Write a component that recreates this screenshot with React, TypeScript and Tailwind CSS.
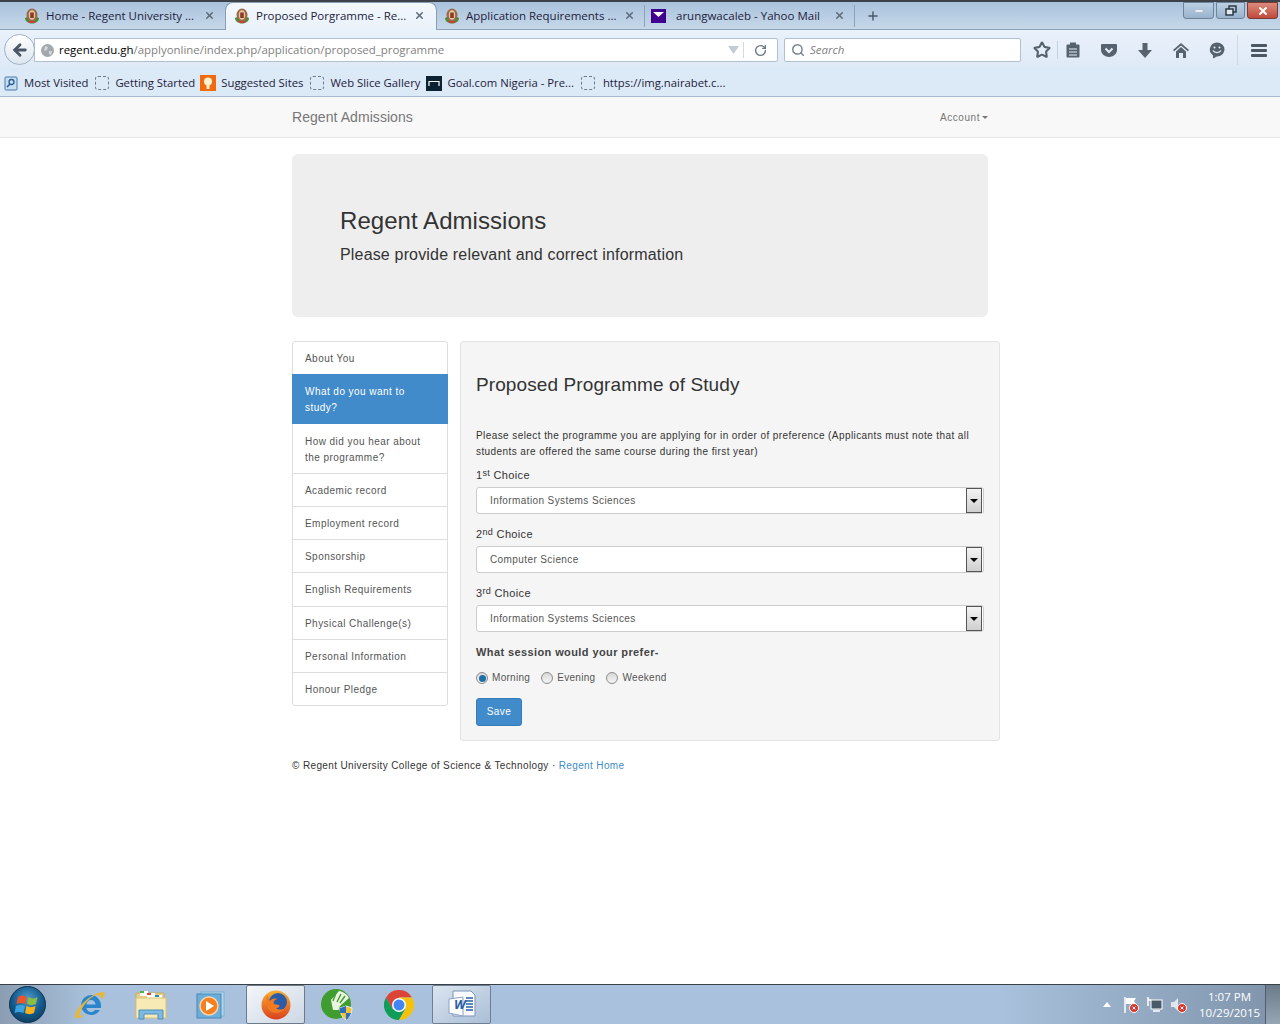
import { ArrowLeft, RotateCw, Search, Star, Plus, X, Minus } from 'lucide-react';

const uiFont = { fontFamily: '"Open Sans", "Noto Sans", sans-serif' };

function Crest() {
  return (
    <svg width="16" height="16" viewBox="0 0 16 16" className="shrink-0">
      <path d="M1 10c0 3 3 5.500 7 5.500s7-2.500 7-5.500l-2-1H3z" fill="#4f8a3a" />
      <ellipse cx="8" cy="7" rx="5.500" ry="6.500" fill="#9a6a48" />
      <ellipse cx="8" cy="7" rx="3.200" ry="4.800" fill="#e6c8a0" />
      <rect x="6.200" y="4.500" width="3.600" height="5.500" fill="#8a3b2a" />
      <path d="M4 13h8l-1.500 2h-5z" fill="#c9423a" />
    </svg>
  );
}

function DashedIcon() {
  return <span className="w-[14px] h-[14px] shrink-0 rounded-[3px] border border-dashed border-[#6b7a8c]" />;
}

function Tab({ label, active, icon, width, left, right, gap }: { label: string; active?: boolean; icon: React.ReactNode; width: string; left: string; right: string; gap: string }) {
  return (
    <div className={`flex items-center self-stretch ${left} ${right} ${gap} text-[11.5px] text-[#231c3c] ${width} ${active ? '-mb-px pb-[2px] bg-gradient-to-b from-[#f3f8fd] to-[#e9f1fa] rounded-t-[8px] border border-b-0 border-[#8a9db3]' : ''}`}>
      {icon}
      <span className="flex-1 whitespace-nowrap">{label}</span>
      <X className="w-[11px] h-[11px] text-[#5f6d7c] shrink-0" strokeWidth={3.5} />
    </div>
  );
}

function Bookmark({ icon, label, offset, gap = 'gap-[6px]' }: { icon: React.ReactNode; label: string; offset: string; gap?: string }) {
  return (
    <div className={`flex items-center ${gap} ${offset} whitespace-nowrap`}>
      {icon}
      <span>{label}</span>
    </div>
  );
}

function BrowserChrome() {
  return (
    <div style={uiFont} className="h-[97px] shrink-0 flex flex-col border-b border-[#a9bccf] bg-[#dce9f7]">
      <div className="h-[30px] shrink-0 flex items-end pl-[15px] pr-[2px] border-t-2 border-t-[#3c4248] border-b border-b-[#8da2b8] bg-gradient-to-b from-[#a9c2dc] to-[#c6d8ea]">
        <Tab label="Home - Regent University ..." width="w-[210px]" left="pl-[9px]" right="pr-[10px]" gap="gap-[6px]" icon={<Crest />} />
        <Tab label="Proposed Porgramme - Re..." active width="w-[212px]" left="pl-[8px]" right="pr-[11px]" gap="gap-[6px]" icon={<Crest />} />
        <Tab label="Application Requirements ..." width="w-[207px]" left="pl-[7px]" right="pr-[9px]" gap="gap-[6px]" icon={<Crest />} />
        <div className="w-px h-[22px] bg-[#8da2b8] self-center" />
        <Tab
          label="arungwacaleb - Yahoo Mail"
          width="w-[209px]"
          left="pl-[6px]"
          right="pr-[9px]"
          gap="gap-[10px]"
          icon={
            <svg width="15" height="14" viewBox="0 0 15 14" className="shrink-0">
              <rect width="15" height="14" fill="#400090" />
              <path d="M2 3h11L7.500 8z" fill="#fff" />
            </svg>
          }
        />
        <div className="w-px h-[22px] bg-[#8da2b8] self-center" />
        <Plus className="w-[14px] h-[14px] text-[#4a5a6a] ml-[11px] self-center" strokeWidth={2.5} />
        <div className="flex-1" />
        <div className="flex self-start gap-[2px]">
          <div className="w-[31px] h-[17px] rounded-b-[3px] border border-[#6f8399] bg-gradient-to-b from-[#bcd0e4] to-[#9ab3cd] flex items-center justify-center">
            <Minus className="w-[10px] h-[10px] text-white" strokeWidth={4} />
          </div>
          <div className="w-[29px] h-[17px] rounded-b-[3px] border border-[#6f8399] bg-gradient-to-b from-[#bcd0e4] to-[#9ab3cd] flex items-center justify-center">
            <svg width="12" height="11" viewBox="0 0 12 11" fill="none" stroke="#26313d" strokeWidth="1.400">
              <rect x="4" y="1" width="7" height="6" />
              <rect x="1" y="4" width="7" height="6" fill="#dfe8f1" />
            </svg>
          </div>
          <div className="w-[31px] h-[17px] rounded-b-[3px] border border-[#7c3b34] bg-gradient-to-b from-[#dc8b7c] to-[#c0493a] flex items-center justify-center">
            <X className="w-[12px] h-[12px] text-white" strokeWidth={4} />
          </div>
        </div>
      </div>
      <div className="h-[37px] shrink-0 flex items-center relative pt-[3px] pl-[34px] pr-[8px] bg-gradient-to-b from-[#e9f1fa] to-[#dfeaf7]">
        <div className="absolute left-[4px] top-[4px] w-[31px] h-[31px] rounded-full border border-[#9fb2c6] bg-gradient-to-b from-white to-[#dde6ef] flex items-center justify-center z-10">
          <ArrowLeft className="w-[18px] h-[18px] text-[#4a5766]" strokeWidth={3.8} />
        </div>
        <div className="w-[744px] h-[24px] flex items-center bg-white border border-[#b0c0d0] rounded-r-[2px] pl-[6px] text-[11.45px] text-[#7f7f7f]">
          <svg width="13" height="13" viewBox="0 0 13 13" className="shrink-0">
            <circle cx="6.500" cy="6.500" r="6.500" fill="#a3a8ad" />
            <path d="M4 2l3 1-1 3-3 1zM8 7l3 0-1 4-2-1z" fill="#d5d8db" />
          </svg>
          <span className="ml-[5px] flex-1 whitespace-nowrap">
            <span className="text-black">regent.edu.gh</span>/applyonline/index.php/application/proposed_programme
          </span>
          <svg width="11" height="8" viewBox="0 0 11 8" className="mr-[4px]">
            <path d="M0 0h11L5.500 8z" fill="#c3ccd5" />
          </svg>
          <div className="w-px h-[16px] bg-[#d3dae1]" />
          <RotateCw className="w-[13px] h-[13px] mx-[10px] text-[#6c7884]" strokeWidth={2.5} />
        </div>
        <div className="ml-[6px] w-[237px] h-[24px] flex items-center bg-white border border-[#b0c0d0] rounded-[2px] pl-[6px] text-[11.5px] italic text-[#7f7f7f]">
          <Search className="w-[14px] h-[14px] text-[#77828e] mr-[5px]" strokeWidth={2.5} />
          Search
        </div>
        <div className="flex items-center ml-[12px]">
          <Star className="w-[18px] h-[18px] text-[#56636f]" strokeWidth={2.8} />
          <div className="w-px h-[18px] bg-[#c5d2df] ml-[6px]" />
          <svg width="14" height="16" viewBox="0 0 14 16" className="ml-[8px]">
            <rect x="0.500" y="2.500" width="13" height="13" rx="1" fill="#56636f" />
            <rect x="4" y="0.500" width="6" height="3" fill="#56636f" />
            <path d="M3 7h8M3 10h8M3 13h8" stroke="#e3edf8" strokeWidth="1.200" />
          </svg>
          <svg width="16" height="15" viewBox="0 0 16 15" className="ml-[21px]">
            <path d="M1 1h14a1 1 0 011 1v5c0 4-4 7-8 7s-8-3-8-7V2a1 1 0 011-1z" fill="#56636f" />
            <path d="M4.500 5.500L8 9l3.500-3.500" fill="none" stroke="#e3edf8" strokeWidth="2" />
          </svg>
          <svg width="18" height="17" viewBox="0 0 18 17" className="ml-[19px]">
            <path d="M6.500 1h5v7H16l-7 8-7-8h4.500z" fill="#56636f" />
          </svg>
          <svg width="18" height="17" viewBox="0 0 18 17" className="ml-[18px]">
            <path d="M9 1l8 7-1.200 1.200L9 3.500 2.200 9.200 1 8z" fill="#56636f" />
            <path d="M9 5l5 4.500V16h-3v-5H7v5H4V9.500z" fill="#56636f" />
          </svg>
          <svg width="16" height="17" viewBox="0 0 16 17" className="ml-[19px]">
            <path d="M8 0.500a7.500 7 0 110 14l-4 2 0-3.300A7.500 7 0 018 0.500z" fill="#56636f" />
            <circle cx="5.500" cy="5.500" r="1" fill="#e3edf8" />
            <circle cx="10.500" cy="5.500" r="1" fill="#e3edf8" />
            <path d="M4 8.500c1.500 2.800 6.500 2.800 8 0" fill="none" stroke="#e3edf8" strokeWidth="1.400" />
          </svg>
          <div className="w-px h-[30px] bg-[#cbd8e5] ml-[12px]" />
          <div className="flex flex-col gap-[2px] ml-[13px]">
            <span className="w-[16px] h-[3px] bg-[#4b5763] rounded-[1px]" />
            <span className="w-[16px] h-[3px] bg-[#4b5763] rounded-[1px]" />
            <span className="w-[16px] h-[3px] bg-[#4b5763] rounded-[1px]" />
          </div>
        </div>
      </div>
      <div className="flex-1 flex items-center pt-[3px] pl-[4px] text-[11.3px] text-[#231c3c]">
        <Bookmark
          label="Most Visited"
          offset="ml-0"
          icon={
            <svg width="14" height="15" viewBox="0 0 14 15">
              <rect x="1" y="1" width="12" height="13" rx="1" fill="#c6dcf0" stroke="#4d7ba8" />
              <circle cx="7.500" cy="6" r="2.500" fill="none" stroke="#2a5f95" strokeWidth="1.300" />
              <path d="M6 8l-3 3" stroke="#2a5f95" strokeWidth="1.600" />
            </svg>
          }
        />
        <Bookmark label="Getting Started" offset="ml-[7px]" icon={<DashedIcon />} />
        <Bookmark
          label="Suggested Sites"
          offset="ml-[5px]"
          gap="gap-[5px]"
          icon={
            <svg width="16" height="16" viewBox="0 0 16 16">
              <rect width="16" height="16" fill="#f26a0f" />
              <circle cx="8" cy="6.500" r="4" fill="#fff3d0" />
              <rect x="6.500" y="10" width="3" height="4" fill="#fff3d0" />
            </svg>
          }
        />
        <Bookmark label="Web Slice Gallery" offset="ml-[7px]" icon={<DashedIcon />} />
        <Bookmark
          label="Goal.com Nigeria - Pre..."
          offset="ml-[6px]"
          gap="gap-[5px]"
          icon={
            <svg width="16" height="15" viewBox="0 0 16 15">
              <rect width="16" height="15" fill="#0c2233" />
              <path d="M3 10V5.500h10V10" fill="none" stroke="#fff" strokeWidth="1.200" />
            </svg>
          }
        />
        <Bookmark label="https://img.nairabet.c..." offset="ml-[7px]" gap="gap-[8px]" icon={<DashedIcon />} />
      </div>
    </div>
  );
}

const sideItems = [
  { label: 'Academic record', height: 'h-[33px]' },
  { label: 'Employment record', height: 'h-[33px]' },
  { label: 'Sponsorship', height: 'h-[33px]' },
  { label: 'English Requirements', height: 'h-[34px]' },
  { label: 'Physical Challenge(s)', height: 'h-[33px]' },
  { label: 'Personal Information', height: 'h-[33px]' },
];

function Sidebar() {
  return (
    <div className="w-[156px] shrink-0 self-start bg-white border border-[#ddd] rounded-[3px] text-[10px] leading-[16px] tracking-[0.45px] text-[#555]">
      <div className="h-[32px] px-[12px] pt-[2px] flex items-center">About You</div>
      <div className="-mx-px px-[13px] pt-[10px] h-[50px] bg-[#428bca] text-white">What do you want to study?</div>
      <div className="px-[12px] pt-[10px] h-[50px] border-b border-[#ddd]">How did you hear about the programme?</div>
      {sideItems.map((item) => (
        <div key={item.label} className={`${item.height} px-[12px] pt-px flex items-center border-b border-[#ddd]`}>
          {item.label}
        </div>
      ))}
      <div className="h-[32px] px-[12px] pt-[2px] flex items-center">Honour Pledge</div>
    </div>
  );
}

function ChoiceSelect({ value }: { value: string }) {
  return (
    <div className="h-[27px] flex items-center bg-white border border-[#ccc] rounded-[3px] pl-[13px] pr-px text-[10px] tracking-[0.4px] text-[#555]">
      <span className="flex-1">{value}</span>
      <div className="w-[16px] h-[25px] border border-[#555] bg-gradient-to-b from-[#f4f4f4] to-[#cfcfcf] flex items-center justify-center">
        <span className="w-0 h-0 border-x-[4px] border-x-transparent border-t-[4px] border-t-black" />
      </div>
    </div>
  );
}

function Choice({ num, suffix, value }: { num: string; suffix: string; value: string }) {
  return (
    <div>
      <div className="h-[19px] text-[11px] leading-[19px] tracking-[0.35px] text-[#333] mb-[2px]">
        {num}
        <sup className="text-[9px] -top-[3px]">{suffix}</sup> Choice
      </div>
      <ChoiceSelect value={value} />
    </div>
  );
}

function Radio({ label, checked }: { label: string; checked?: boolean }) {
  return (
    <div className="flex items-center gap-[4px] mr-[11px] text-[10px] tracking-[0.3px] text-[#555]">
      <span className="w-[12px] h-[12px] mt-[2px] rounded-full border border-[#8c8c8c] bg-gradient-to-b from-[#d8d8d8] to-[#f5f5f5] flex items-center justify-center">
        {checked && <span className="w-[7px] h-[7px] rounded-full bg-[#1c6fa8]" />}
      </span>
      {label}
    </div>
  );
}

export default function App() {
  return (
    <div className="h-[1024px] flex flex-col overflow-hidden bg-white" style={{ fontFamily: '"Liberation Sans", Arial, sans-serif' }}>
      <BrowserChrome />

      <div className="flex-1 min-h-0">
        {/* Navbar */}
        <div className="h-[41px] bg-[#f8f8f8] border-b border-[#e7e7e7]">
          <div className="w-[696px] ml-[292px] h-full flex items-center justify-between">
            <span className="text-[14px] tracking-[0.06px] text-[#777]">Regent Admissions</span>
            <span className="flex items-center gap-[2px] text-[10px] tracking-[0.55px] text-[#777]">
              Account
              <span className="w-0 h-0 mt-[1px] border-x-[3px] border-x-transparent border-t-[3px] border-t-[#777]" />
            </span>
          </div>
        </div>

        <div className="w-[708px] ml-[292px]">
          {/* Jumbotron */}
          <div className="w-[696px] h-[163px] mt-[16px] bg-[#eee] rounded-[6px] pl-[48px] pt-[50px]">
            <div className="text-[24px] leading-[34px] tracking-[0.05px] text-[#333]">Regent Admissions</div>
            <div className="text-[16px] leading-[22px] tracking-[0.17px] mt-[6px] text-[#333]">Please provide relevant and correct information</div>
          </div>

          <div className="flex gap-[12px] mt-[24px]">
            <Sidebar />
            <div className="flex-1 h-[400px] bg-[#f5f5f5] border border-[#e3e3e3] rounded-[3px] pl-[15px] pr-[15px]">
              <div className="text-[19px] leading-[24px] tracking-[0.1px] mt-[31px] text-[#333]">Proposed Programme of Study</div>
              <p className="text-[10px] leading-[16px] tracking-[0.42px] mt-[31px] text-[#333]">
                Please select the programme you are applying for in order of preference (Applicants must note that all students are offered the same course during the first year)
              </p>
              <div className="flex flex-col gap-[11px] mt-[6px]">
                <Choice num="1" suffix="st" value="Information Systems Sciences" />
                <Choice num="2" suffix="nd" value="Computer Science" />
                <Choice num="3" suffix="rd" value="Information Systems Sciences" />
              </div>
              <div className="text-[11px] font-bold tracking-[0.4px] mt-[12px] text-[#444]">What session would your prefer-</div>
              <div className="flex mt-[9px]">
                <Radio label="Morning" checked />
                <Radio label="Evening" />
                <Radio label="Weekend" />
              </div>
              <div className="w-[46px] h-[28px] mt-[13px] bg-[#428bca] border border-[#357ebd] rounded-[3px] flex items-center justify-center text-[10px] tracking-[0.4px] text-white">
                Save
              </div>
            </div>
          </div>

          <div className="mt-[17px] text-[10px] tracking-[0.37px] text-[#333]">
            © Regent University College of Science &amp; Technology · <span className="text-[#428bca]">Regent Home</span>
          </div>
        </div>
      </div>

      {/* Taskbar */}
      <div className="h-[40px] shrink-0 flex items-center border-t border-t-[#3a4048] bg-[linear-gradient(90deg,#8b9db2_0px,#a9c1dc_90px,#a9c1dc_1000px,#7f94ab_1280px)]" style={uiFont}>
        <div className="w-[54px] flex justify-center">
          <svg width="37" height="37" viewBox="0 0 37 37">
            <defs>
              <radialGradient id="orb" cx="50%" cy="35%" r="70%">
                <stop offset="0%" stopColor="#4f9fd0" />
                <stop offset="60%" stopColor="#15588a" />
                <stop offset="100%" stopColor="#0e3a5a" />
              </radialGradient>
            </defs>
            <circle cx="18.500" cy="18.500" r="18" fill="url(#orb)" stroke="#0f3350" />
            <path d="M9 11c3-2 6-2 9 0l-1.500 7c-3-1.500-6-1.500-9 0z" fill="#e9562c" />
            <path d="M19.500 11c3 2 6 2 9 0L27 18c-3 1.500-6 1.500-9 0z" fill="#8cbf3f" />
            <path d="M7 20c3-1.500 6-1.500 9 0l-1.500 7c-3-1.500-6-1.500-9 0z" fill="#3ba3e0" />
            <path d="M17.500 20c3 1.500 6 1.500 9 0L25 27c-3 1.500-6 1.500-9 0z" fill="#f7b21b" />
          </svg>
        </div>
        <div className="w-[72px] flex justify-center">
          <svg width="32" height="32" viewBox="0 0 32 32">
            <path d="M17 6a10 10 0 100 20c4 0 7-2 9-5h-5c-1 1.500-2.500 2-4 2-2.500 0-4.500-2-4.500-4H27c1-7-4-13-10-13zm-4.500 9.500c0-2.500 2-4.500 4.500-4.500s4.500 2 4.500 4.500z" fill="#2a86cc" />
            <path d="M1 28C0 21 17 3 30 3c2 2-1 6-3 8 .5-3-.5-5-4-5C16 7 7 18 5 27c3 0 6-1 8-3-4 4-10 7-12 4z" fill="#e8b73a" />
          </svg>
        </div>
        <div className="w-[50px] flex justify-center">
          <svg width="32" height="30" viewBox="0 0 32 30">
            <path d="M1 3h28v24H1z" fill="#e6cf86" stroke="#c4ac63" />
            <rect x="5" y="1" width="8" height="5" fill="#fff" />
            <rect x="5" y="1" width="4" height="2" fill="#4caf50" />
            <rect x="12" y="3" width="8" height="5" fill="#fff" />
            <rect x="12" y="3" width="4" height="2" fill="#d9453a" />
            <rect x="19" y="5" width="8" height="5" fill="#fff" />
            <rect x="20" y="5" width="4" height="2" fill="#2a86cc" />
            <rect x="1" y="8" width="30" height="20" fill="#f8eab4" stroke="#d9c37d" />
            <path d="M4 29v-9h24v9h-5v-5H9v5z" fill="#7db9e0" stroke="#4d8fbd" />
          </svg>
        </div>
        <div className="w-[70px] flex justify-center">
          <svg width="30" height="30" viewBox="0 0 30 30">
            <rect x="5" y="2" width="23" height="24" fill="#b5d6ec" stroke="#7db0d1" />
            <rect x="1" y="4" width="24" height="24" fill="#6aaedb" stroke="#4b87b4" />
            <circle cx="13" cy="16" r="9" fill="#f4811f" stroke="#fbd2a8" strokeWidth="1.500" />
            <path d="M10 11l8 5-8 5z" fill="#fff" />
          </svg>
        </div>
        <div className="w-[59px] h-[39px] flex items-center justify-center border border-[#6d7a8a] rounded-[2px] bg-gradient-to-br from-[#f3f6fa] to-[#cdd8e4]">
          <svg width="30" height="30" viewBox="0 0 30 30">
            <defs>
              <linearGradient id="fox" x1="0" y1="0" x2="0" y2="1">
                <stop offset="0%" stopColor="#f9b233" />
                <stop offset="100%" stopColor="#d9401f" />
              </linearGradient>
            </defs>
            <circle cx="15" cy="15" r="14.500" fill="url(#fox)" />
            <circle cx="17" cy="12" r="9" fill="#2a5ca8" />
            <path d="M6 5C4 11 5 19 11 22c5 2 11 0 13-4-3 2-7 2-9 0 3 0 4-2 3-3l-5-1c-1-3 1-4 3-5-3-1-6 0-7 2-1-2-2-4-3-6z" fill="#f47a20" />
          </svg>
        </div>
        <div className="w-[64px] flex justify-center">
          <svg width="32" height="32" viewBox="0 0 32 32">
            <circle cx="15" cy="15" r="15" fill="#3f9c2f" />
            <path d="M18 2c4 .5 8 3 10 7l-9 8-1.500 4H12l-2-10z" fill="#eaf4de" />
            <path d="M15 4l-3 8M20 5l-4 8M24 7l-5 7" stroke="#3f9c2f" strokeWidth="1.400" />
            <path d="M19 19l6-2 6 2c0 6-3 10-6 12-3-2-6-6-6-12z" fill="#f2c230" stroke="#e8eef5" />
            <path d="M25 17v7h-6c0-2 0-4 0-5zM25 24h5c-1 3-3 6-5 7z" fill="#2c6fc0" />
          </svg>
        </div>
        <div className="w-[60px] flex justify-center">
          <svg width="30" height="30" viewBox="0 0 30 30">
            <path d="M28 7.500H15L8.500 18.750 2 7.500A15 15 0 0128 7.500z" fill="#db4437" />
            <path d="M2 7.500l6.500 11.250h13L15 30A15 15 0 012 7.500z" fill="#0f9d58" />
            <path d="M28 7.500H15l6.500 11.250L15 30A15 15 0 0028 7.500z" fill="#f4c20d" />
            <circle cx="15" cy="15" r="7" fill="#fff" />
            <circle cx="15" cy="15" r="5.500" fill="#4285f4" />
          </svg>
        </div>
        <div className="w-[59px] h-[39px] ml-[3px] flex items-center justify-center border border-[#6f7f92] rounded-[2px] bg-gradient-to-br from-[#dbe5f0] to-[#a9bed6]">
          <svg width="32" height="30" viewBox="0 0 32 30">
            <path d="M7 1h18l4 4v21H7z" fill="#f7f9fc" stroke="#7d95b8" />
            <rect x="11" y="5" width="16" height="14" fill="#fff" />
            <path d="M3 9l14 -2v19L3 23z" fill="#fff" stroke="#8aa3c6" />
            <text x="8" y="19" fontSize="13" fontWeight="700" fontStyle="italic" fill="#2b5ea8">W</text>
            <path d="M20 8h7M20 11h7M20 14h7M20 17h7M20 20h7" stroke="#2b5ea8" strokeWidth="1.600" />
          </svg>
        </div>
        <div className="flex-1" />
        <svg width="8" height="5" viewBox="0 0 8 5" className="mr-[11px]">
          <path d="M4 0l4 5H0z" fill="#fff" />
        </svg>
        <svg width="18" height="18" viewBox="0 0 18 18" className="mr-[7px]">
          <path d="M3 1v16" stroke="#fff" strokeWidth="1.500" />
          <path d="M4 2h10l-2 3 2 3H4z" fill="#fff" />
          <circle cx="12" cy="12" r="4.500" fill="#d9362b" stroke="#fff" />
          <path d="M10.500 10.500l3 3M13.500 10.500l-3 3" stroke="#fff" />
        </svg>
        <svg width="16" height="17" viewBox="0 0 16 17" className="mr-[7px]">
          <rect x="4" y="4" width="11" height="9" fill="#4b5a68" stroke="#fff" />
          <path d="M6 15h7M1 1v9M1 4h3" stroke="#fff" strokeWidth="1.500" />
        </svg>
        <svg width="18" height="18" viewBox="0 0 18 18">
          <path d="M1 6h3l4-4v13l-4-4H1z" fill="#e2e6ea" />
          <circle cx="12" cy="12" r="4.500" fill="#d9362b" stroke="#fff" />
          <path d="M10.500 10.500l3 3M13.500 10.500l-3 3" stroke="#fff" />
        </svg>
        <div className="w-[60px] ml-[11px] text-[11.5px] leading-[16px] text-right text-white whitespace-nowrap">
          <div className="pr-[8px]">1:07 PM</div>
          <div>10/29/2015</div>
        </div>
        <div className="w-[15px] h-[39px] ml-[6px] border-l border-[#4f5d6c] bg-gradient-to-b from-[#6c7b8a] to-[#97a6b5]" />
      </div>
    </div>
  );
}
